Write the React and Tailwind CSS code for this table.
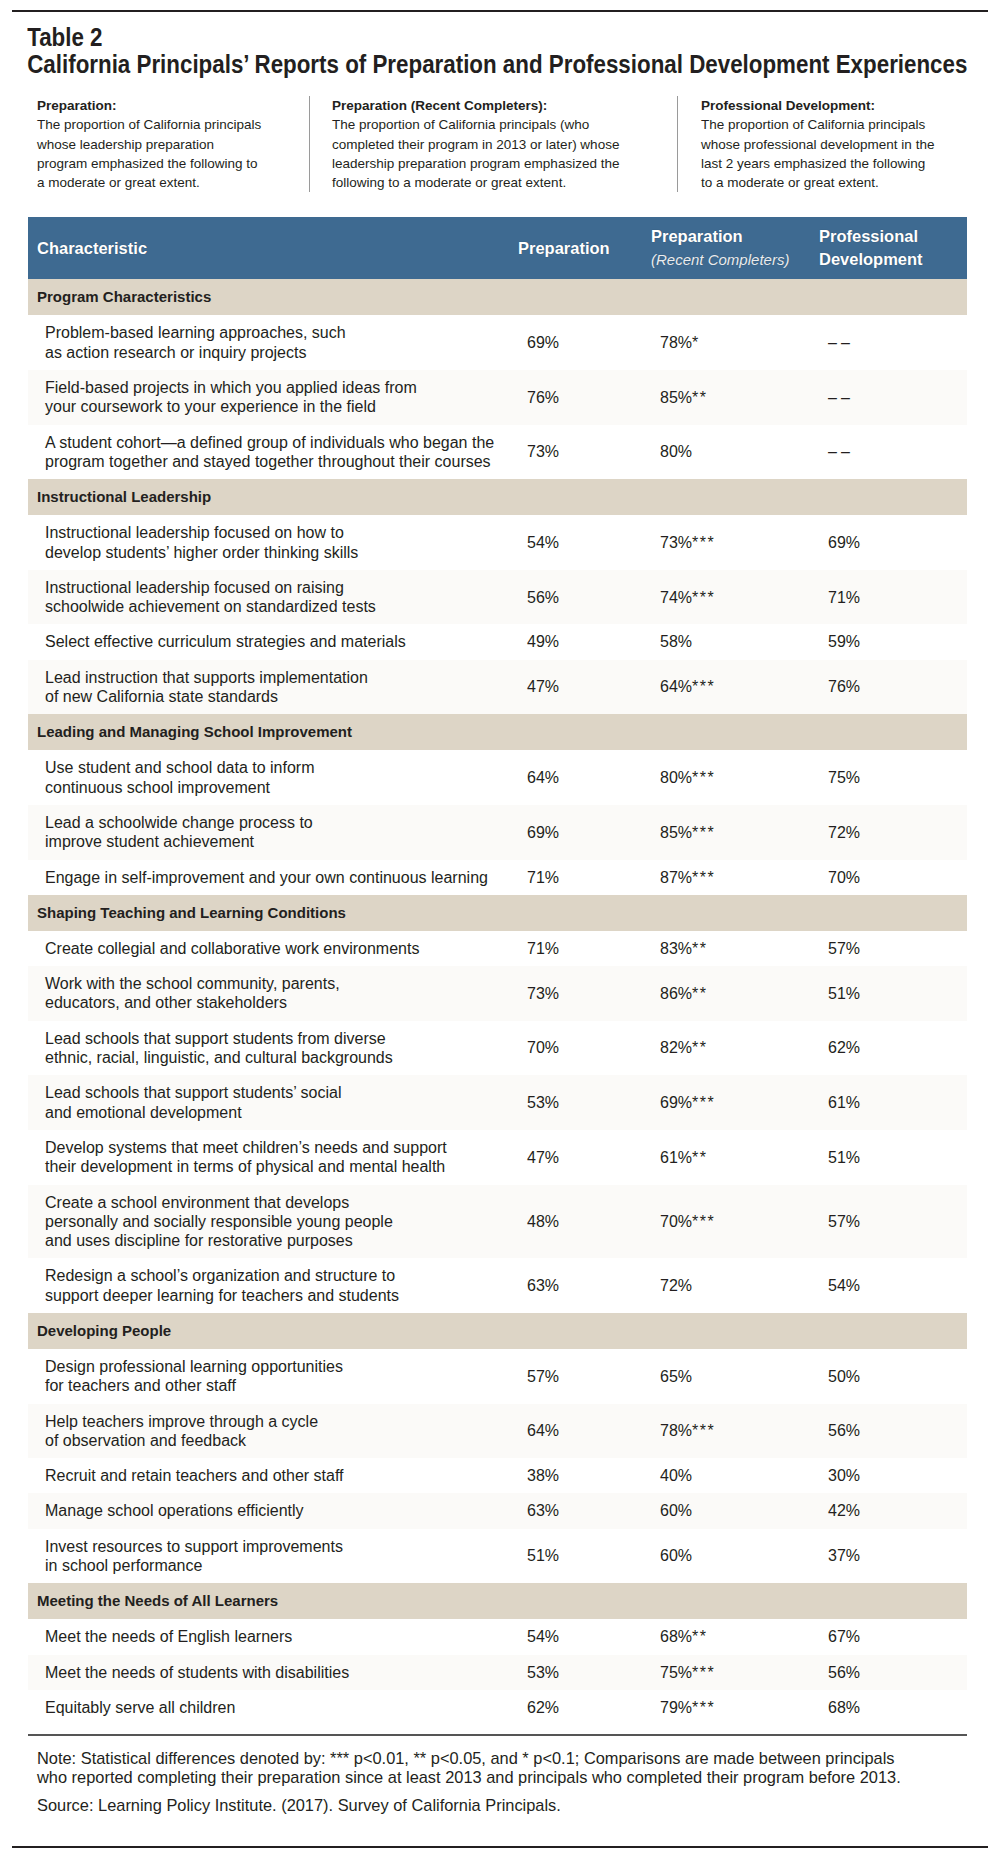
import React from "react";

const sections = [
  {
    title: "Program Characteristics",
    rows: [
      [["Problem-based learning approaches, such", "as action research or inquiry projects"], "69%", "78%*", "--"],
      [["Field-based projects in which you applied ideas from", "your coursework to your experience in the field"], "76%", "85%**", "--"],
      [["A student cohort—a defined group of individuals who began the", "program together and stayed together throughout their courses"], "73%", "80%", "--"],
    ],
  },
  {
    title: "Instructional Leadership",
    rows: [
      [["Instructional leadership focused on how to", "develop students’ higher order thinking skills"], "54%", "73%***", "69%"],
      [["Instructional leadership focused on raising", "schoolwide achievement on standardized tests"], "56%", "74%***", "71%"],
      [["Select effective curriculum strategies and materials"], "49%", "58%", "59%"],
      [["Lead instruction that supports implementation", "of new California state standards"], "47%", "64%***", "76%"],
    ],
  },
  {
    title: "Leading and Managing School Improvement",
    rows: [
      [["Use student and school data to inform", "continuous school improvement"], "64%", "80%***", "75%"],
      [["Lead a schoolwide change process to", "improve student achievement"], "69%", "85%***", "72%"],
      [["Engage in self-improvement and your own continuous learning"], "71%", "87%***", "70%"],
    ],
  },
  {
    title: "Shaping Teaching and Learning Conditions",
    rows: [
      [["Create collegial and collaborative work environments"], "71%", "83%**", "57%"],
      [["Work with the school community, parents,", "educators, and other stakeholders"], "73%", "86%**", "51%"],
      [["Lead schools that support students from diverse", "ethnic, racial, linguistic, and cultural backgrounds"], "70%", "82%**", "62%"],
      [["Lead schools that support students’ social", "and emotional development"], "53%", "69%***", "61%"],
      [["Develop systems that meet children’s needs and support", "their development in terms of physical and mental health"], "47%", "61%**", "51%"],
      [["Create a school environment that develops", "personally and socially responsible young people", "and uses discipline for restorative purposes"], "48%", "70%***", "57%"],
      [["Redesign a school’s organization and structure to", "support deeper learning for teachers and students"], "63%", "72%", "54%"],
    ],
  },
  {
    title: "Developing People",
    rows: [
      [["Design professional learning opportunities", "for teachers and other staff"], "57%", "65%", "50%"],
      [["Help teachers improve through a cycle", "of observation and feedback"], "64%", "78%***", "56%"],
      [["Recruit and retain teachers and other staff"], "38%", "40%", "30%"],
      [["Manage school operations efficiently"], "63%", "60%", "42%"],
      [["Invest resources to support improvements", "in school performance"], "51%", "60%", "37%"],
    ],
  },
  {
    title: "Meeting the Needs of All Learners",
    rows: [
      [["Meet the needs of English learners"], "54%", "68%**", "67%"],
      [["Meet the needs of students with disabilities"], "53%", "75%***", "56%"],
      [["Equitably serve all children"], "62%", "79%***", "68%"],
    ],
  },
];

const gridCols = "grid grid-cols-[481px_133px_168px_157px]";

function Value({ v }) {
  if (v === "--") {
    return <span className="tracking-[4px]">––</span>;
  }
  const idx = v.indexOf("*");
  if (idx === -1) return <span>{v}</span>;
  return (
    <span>
      {v.slice(0, idx)}
      <span className="tracking-[1.5px]">{v.slice(idx)}</span>
    </span>
  );
}

export default function App() {
  return (
    <div
      className="w-[1000px] bg-white text-[#231f20] px-3 pt-[10px] pb-[11px]"
      style={{ fontFamily: '"Liberation Sans", Arial, sans-serif' }}
    >
      <div className="h-[2px] bg-[#231f20]" />

      <div className="mt-[12px] pl-[17px] font-bold text-[25px] leading-[27px] whitespace-nowrap origin-left scale-x-[0.894]">
        <div>Table 2</div>
        <div>California Principals’ Reports of Preparation and Professional Development Experiences</div>
      </div>

      <div className="mt-[18px] flex text-[13.5px] leading-[19.3px]">
        <div className="w-[297px] pl-[25px]">
          <div className="font-bold">Preparation:</div>
          <div>
            The proportion of California principals
            <br />
            whose leadership preparation
            <br />
            program emphasized the following to
            <br />
            a moderate or great extent.
          </div>
        </div>
        <div className="w-[368px] border-l border-[#9a9a9a] pl-[22px]">
          <div className="font-bold">Preparation (Recent Completers):</div>
          <div>
            The proportion of California principals (who
            <br />
            completed their program in 2013 or later) whose
            <br />
            leadership preparation program emphasized the
            <br />
            following to a moderate or great extent.
          </div>
        </div>
        <div className="flex-1 border-l border-[#9a9a9a] pl-[23px]">
          <div className="font-bold">Professional Development:</div>
          <div>
            The proportion of California principals
            <br />
            whose professional development in the
            <br />
            last 2 years emphasized the following
            <br />
            to a moderate or great extent.
          </div>
        </div>
      </div>

      <div className="mt-[25px] ml-[16px] w-[939px]">
        <div className={`${gridCols} h-[62px] bg-[#3e6a91] text-white font-bold text-[16.5px] items-center [text-shadow:0_0_1px_rgba(0,0,0,0.35)]`}>
          <div className="pl-[9px]">Characteristic</div>
          <div className="pl-[9px]">Preparation</div>
          <div className="pl-[9px] leading-[23px]">
            <div>Preparation</div>
            <div className="italic font-normal text-[15px] text-white/90">(Recent Completers)</div>
          </div>
          <div className="pl-[9px] leading-[23px]">
            <div>Professional</div>
            <div>Development</div>
          </div>
        </div>

        {sections.map((s) => (
          <div key={s.title}>
            <div className="h-[36px] bg-[#ddd5c6] flex items-center pl-[9px] font-bold text-[15px]">
              {s.title}
            </div>
            {s.rows.map((r, i) => (
              <div
                key={i}
                className={`${gridCols} items-center py-2 text-[16px] leading-[19.3px] ${i % 2 === 1 ? "bg-[#fbfaf8]" : "bg-white"}`}
              >
                <div className="pl-[17px] whitespace-nowrap">
                  {r[0].map((line, k) => (
                    <div key={k}>{line}</div>
                  ))}
                </div>
                <div className="pl-[18px]">
                  <Value v={r[1]} />
                </div>
                <div className="pl-[18px]">
                  <Value v={r[2]} />
                </div>
                <div className="pl-[18px]">
                  <Value v={r[3]} />
                </div>
              </div>
            ))}
          </div>
        ))}

        <div className="mt-[9px] h-[1.5px] bg-[#555]" />

        <div className="pl-[9px] mt-[13px] text-[16.4px] leading-[19.5px] whitespace-nowrap">
          <div>
            Note: Statistical differences denoted by: *** p&lt;0.01, ** p&lt;0.05, and * p&lt;0.1; Comparisons are made between principals
            <br />
            who reported completing their preparation since at least 2013 and principals who completed their program before 2013.
          </div>
          <div className="mt-[8px]">Source: Learning Policy Institute. (2017). Survey of California Principals.</div>
        </div>
      </div>

      <div className="mt-[31px] h-[2px] bg-[#231f20]" />
    </div>
  );
}
